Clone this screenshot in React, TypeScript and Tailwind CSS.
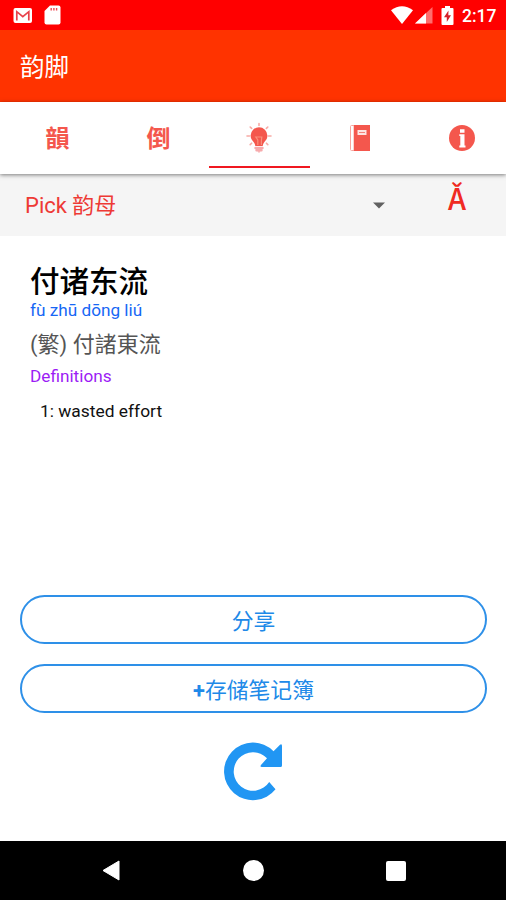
import type { ReactNode } from "react";

const TABS: { id: string; icon: ReactNode }[] = [
  { id: "rhyme", icon: <TabGlyph>韻</TabGlyph> },
  { id: "reverse", icon: <TabGlyph>倒</TabGlyph> },
  { id: "idea", icon: <BulbIcon /> },
  { id: "notebook", icon: <BookIcon /> },
  { id: "about", icon: <InfoIcon /> },
];

function TabGlyph({ children }: { children: ReactNode }) {
  return <span className="pt-[2px] text-[24px] leading-6 font-bold text-[#f4574d]">{children}</span>;
}

function BulbIcon() {
  return (
    <svg className="mr-[1px]" width="26" height="32" viewBox="0 0 26 32">
      <path
        d="M13 1.500v2M4.200 5l1.400 1.400M21.800 5l-1.400 1.400M1 14h2.500M22.500 14H25M4.200 22.600l1.400-1.400M21.800 22.600l-1.400-1.400"
        stroke="#f8aaa5"
        strokeWidth="1.600"
        strokeLinecap="round"
      />
      <path
        d="M13 5.300a8.400 8.400 0 0 0-8.400 8.300c0 3.700 2.100 5.200 3.500 7.200.7 1.100.9 1.900 1.200 3.200h7.400c.3-1.300.5-2.100 1.200-3.200 1.400-2 3.500-3.500 3.500-7.200A8.400 8.400 0 0 0 13 5.300z"
        fill="#f4574d"
      />
      <path d="M11.800 23v-5l-2-3h6l-.4 3.500V23" fill="none" stroke="#f9907c" strokeWidth="1.200" />
      <path d="M9.500 26h7M10.500 28.300h5" stroke="#f7a9ab" strokeWidth="2.400" strokeLinecap="round" />
      <path d="M11.500 29.200h3l-1.500 1.800z" fill="#f7a9ab" />
    </svg>
  );
}

function BookIcon() {
  return (
    <svg width="21" height="26" viewBox="0 0 21 26">
      <path d="M1.500.5H4v25H1.500q-1 0-1-1v-23q0-1 1-1z" fill="#fff" stroke="#f8a49e" />
      <path d="M4 0h16v26H4z" fill="#f4574d" />
      <path d="M7.500 5h9v5h-9z" fill="#fde3e1" />
      <path d="M9 7.500h6" stroke="#f4827b" />
    </svg>
  );
}

function InfoIcon() {
  return (
    <svg width="26" height="26" viewBox="0 0 26 26">
      <circle cx="13" cy="13" r="13" fill="#f4574d" />
      <path d="M11 4.300h4.500v3.500H11zM10.300 9.300h5.200v11.200h1v2h-6.200v-2h1V11h-1z" fill="#fff" />
    </svg>
  );
}

function StatusBar() {
  return (
    <div className="flex h-[30px] shrink-0 items-center bg-[#ff0000] pl-[13px] pr-[9px] text-white">
      <svg width="20" height="17" viewBox="0 0 20 17">
        <rect x="0.500" y="1" width="18.500" height="15" rx="2" fill="#fff" />
        <path d="M3.800 13.500V4.700l6 5 6-5v8.800" fill="none" stroke="#e8414a" strokeWidth="1.700" />
      </svg>
      <svg className="ml-[11px]" width="17" height="20" viewBox="0 0 17 20">
        <path d="M6 .5h8.500q2 0 2 2v15q0 2-2 2h-12q-2 0-2-2V6z" fill="#fff" />
        <path d="M6.500 3h1.400v2.500H6.500zM9.200 3h1.400v2.500H9.200zM11.900 3h1.400v2.500h-1.400z" fill="#ee4b55" />
      </svg>
      <svg className="ml-auto" width="22" height="18" viewBox="0 0 22 18">
        <path d="M0 4.300Q11-4 22 4.300L11 18z" fill="#fff" />
      </svg>
      <svg className="ml-[2px]" width="18" height="17" viewBox="0 0 18 17">
        <path d="M17.500 0v16.500H0z" fill="#ff6d6d" />
        <path d="M11 6v10.500H0z" fill="#fff" />
      </svg>
      <svg className="ml-[8px]" width="13" height="19" viewBox="0 0 13 19">
        <path d="M4 0h5v2h2.500q1 0 1 1v15q0 1-1 1h-10q-1 0-1-1V3q0-1 1-1H4z" fill="#fff" />
        <path d="M7.500 4.500 3 11.300h2.800V16L10 9.300H7.300z" fill="#d5202a" />
      </svg>
      <span className="ml-[8px] w-[35px] pt-[2px] text-[17.500px] leading-[30px] font-medium whitespace-nowrap">2:17</span>
    </div>
  );
}

function TabBar() {
  return (
    <div className="z-10 flex h-[72px] shrink-0 bg-white pl-[7px] shadow-[0_1px_4px_rgba(0,0,0,0.5)]">
      {TABS.map((t) => (
        <button
          key={t.id}
          className={[
            "flex w-[101px] shrink-0 items-center justify-center border-b-2",
            t.id === "idea" ? "mb-[6px] border-[#f01820] pt-[8px]" : "border-transparent pt-[2px]",
          ].join(" ")}
        >
          {t.icon}
        </button>
      ))}
    </div>
  );
}

function OutlineButton({ children }: { children: ReactNode }) {
  return (
    <button className="flex h-[49px] w-full items-center justify-center rounded-full border-2 border-[#2e90e8] pt-[4px] text-[21.800px] leading-none text-[#2089e8]">
      {children}
    </button>
  );
}

function NavBar() {
  return (
    <div className="flex h-[59px] shrink-0 items-center bg-black pl-[102px]">
      <svg width="18" height="21" viewBox="0 0 18 21">
        <path d="M17 1v19L1 10.500z" fill="#fff" stroke="#fff" strokeLinejoin="round" />
      </svg>
      <span className="ml-[123px] size-[21px] rounded-full bg-white" />
      <span className="ml-[122px] size-[20px] rounded-[2px] bg-white" />
    </div>
  );
}

export default function App() {
  return (
    <div className="flex h-[900px] w-[506px] flex-col overflow-hidden bg-white font-[Roboto,'Noto_Sans_CJK_SC',sans-serif]">
      <StatusBar />
      <header className="flex h-[72px] shrink-0 items-center bg-[#ff3300] pl-[20px] pt-[4px] text-[24.500px] text-white">
        韵脚
      </header>
      <TabBar />

      <div className="flex h-[62px] shrink-0 items-center bg-[#f5f5f5] pl-[25px] text-[#ee3a35]">
        <span className="w-[348px] pt-[2px] text-[22px] leading-[30px]">Pick 韵母</span>
        <svg width="12" height="7" viewBox="0 0 12 7">
          <path d="M0 .5h12L6 6.500z" fill="#616161" />
        </svg>
        <span className="mb-[10px] ml-[63px] text-[29px] leading-[30px] font-medium text-[#f02a22]">Ǎ</span>
      </div>

      <main className="flex flex-1 flex-col px-[20px]">
        <section className="h-[359px] pl-[10px] pt-[28px]">
          <h1 className="text-[29.500px] leading-[36px] font-medium text-black">付诸东流</h1>
          <p className="-mt-[1px] text-[17.200px] leading-[22px] text-[#1767f5]">fù zhū dōng liú</p>
          <p className="mt-[6px] text-[22px] leading-[36px] text-[#555]">(繁) 付諸東流</p>
          <p className="mt-[2px] text-[17.200px] leading-[22px] text-[#9c1cf5]">Definitions</p>
          <p className="mt-[13px] pl-[10px] text-[17.400px] leading-[22px] text-[#111]">1: wasted effort</p>
        </section>

        <div className="flex w-[467px] flex-col gap-[20px]">
          <OutlineButton>分享</OutlineButton>
          <OutlineButton>
            <span className="font-bold">+</span>存储笔记簿
          </OutlineButton>
        </div>

        <button className="mt-[29px] w-[60px] self-center">
          <svg width="60" height="60" viewBox="0 0 60 60">
            <path
              d="M50.500 9.300 57 2.800Q59 1.500 59 4v19.500q0 1.500-1.500 1.500H39q-2.500 0-1-2l6-6.800A19.300 19.300 0 1 0 46.200 40L52.500 47.200A28.800 28.800 0 1 1 50.500 9.300z"
              fill="#2196f3"
            />
          </svg>
        </button>
      </main>

      <NavBar />
    </div>
  );
}
